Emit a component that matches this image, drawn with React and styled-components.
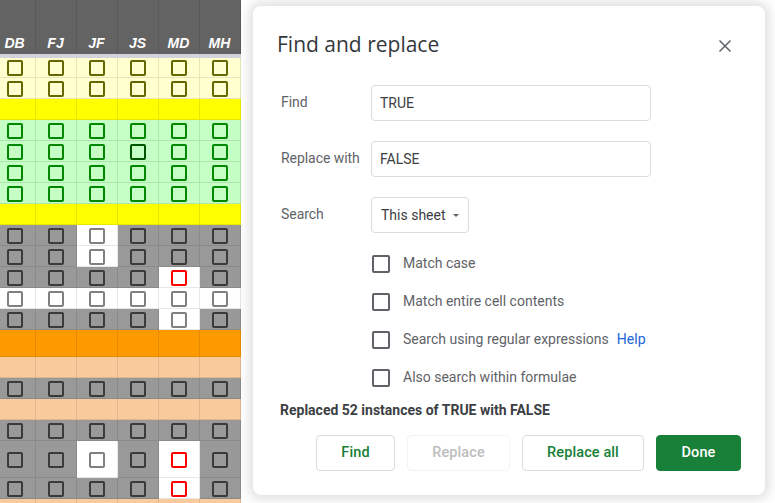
import React from "react";
import styled, { createGlobalStyle } from "styled-components";

const GlobalStyle = createGlobalStyle`
  html, body {
    margin: 0;
    padding: 0;
    background: #fff;
  }
  body {
    width: 775px;
    height: 503px;
    overflow: hidden;
    font-family: Roboto, "Liberation Sans", sans-serif;
  }
`;

const Page = styled.div`
  display: flex;
  align-items: flex-start;
  width: 775px;
  height: 503px;
  overflow: hidden;
`;

/* ---- sheet on the left ---- */

const Sheet = styled.div`
  flex: none;
  width: 241px;
  height: 503px;
  overflow: hidden;
`;

const Columns = styled.div`
  display: grid;
  grid-template-columns: repeat(6, 41px);
  width: 246px;
  margin-left: -5.5px;
`;

const HeaderCell = styled.div`
  height: 54px;
  box-sizing: border-box;
  display: flex;
  align-items: flex-end;
  justify-content: center;
  padding-bottom: 3px;
  background: #636363;
  border-right: 1px solid #5a5a5a;
  color: #fff;
  font: italic bold 14px "Liberation Sans", sans-serif;
`;

const HeaderGap = styled.div`
  height: 4px;
  background: #d3d3dc;
  grid-column: 1 / -1;
`;

const Cell = styled.div`
  height: ${(p) => p.$h || 21}px;
  box-sizing: border-box;
  display: flex;
  align-items: center;
  justify-content: center;
  background: ${(p) => p.$bg};
  border-right: 1px solid ${(p) => p.$line};
  border-bottom: 1px solid ${(p) => p.$line};
`;

const Tick = styled.span`
  width: 16px;
  height: 16px;
  box-sizing: border-box;
  border: 2px solid ${(p) => p.$color};
  border-radius: 2px;
  margin-top: 1px;
`;

/* ---- dialog ---- */

const Dialog = styled.div`
  flex: none;
  position: relative;
  width: 512px;
  height: 489px;
  box-sizing: border-box;
  margin: 6px 0 0 12px;
  padding: 22px 24px 24px 24px;
  background: #fff;
  border-radius: 8px;
  box-shadow: 0 0 12px 4px rgba(0, 0, 0, 0.13);
  display: flex;
  flex-direction: column;
`;

const TitleRow = styled.div`
  display: flex;
  align-items: center;
  justify-content: space-between;
  height: 32px;
  margin-bottom: 25px;
`;

const Title = styled.h1`
  margin: 0;
  font-family: "Open Sans", Roboto, sans-serif;
  font-size: 21px;
  font-weight: 400;
  color: #35383b;
`;

const Close = styled.button`
  width: 14px;
  height: 14px;
  padding: 0;
  margin-right: 9px;
  margin-top: 3px;
  border: 0;
  background: none;
  display: flex;
`;

const FieldRow = styled.div`
  display: flex;
  align-items: center;
  height: 36px;
  margin-bottom: 20px;
  padding-left: 4px;
`;

const Label = styled.label`
  width: 90px;
  margin-top: -2px;
  font-size: 14px;
  letter-spacing: -0.05px;
  color: #5f6368;
`;

const TextBox = styled.div`
  width: 280px;
  height: 36px;
  box-sizing: border-box;
  display: flex;
  align-items: center;
  padding-left: 8px;
  border: 1px solid #dadce0;
  border-radius: 4px;
  font-size: 14px;
  color: #3c4043;
`;

const Select = styled.div`
  width: 98px;
  height: 36px;
  box-sizing: border-box;
  display: flex;
  align-items: center;
  padding-left: 9px;
  gap: 7px;
  border: 1px solid #dadce0;
  border-radius: 4px;
  font-size: 14px;
  color: #3c4043;
`;

const Caret = styled.span`
  width: 0;
  height: 0;
  border-left: 3.5px solid transparent;
  border-right: 3.5px solid transparent;
  border-top: 3.5px solid #5f6368;
`;

const Options = styled.div`
  display: flex;
  flex-direction: column;
  gap: 20px;
  padding-left: 95px;
  margin-top: 2px;
`;

const Option = styled.div`
  display: flex;
  align-items: center;
  height: 18px;
  font-size: 14px;
  color: #5f6368;
`;

const OptionText = styled.span`
  margin-top: -2px;
`;

const Box = styled.span`
  width: 18px;
  height: 18px;
  box-sizing: border-box;
  border: 2px solid #5f6368;
  border-radius: 2px;
  margin-right: 13px;
`;

const Help = styled.a`
  margin-left: 8px;
  color: #1a63d8;
`;

const Status = styled.div`
  margin-top: 15px;
  padding-left: 3px;
  font-size: 14px;
  font-weight: 700;
  color: #3c4043;
`;

const Buttons = styled.div`
  display: flex;
  justify-content: flex-end;
  gap: 12px;
  margin-top: auto;
`;

const Button = styled.button`
  width: ${(p) => p.$w}px;
  height: 36px;
  box-sizing: border-box;
  padding: 0 0 2px;
  border-radius: 4px;
  font-family: Roboto, sans-serif;
  font-size: 14.5px;
  font-weight: 500;
  letter-spacing: 0.1px;
  background: ${(p) => (p.$primary ? "#188038" : "#fff")};
  color: ${(p) => (p.$primary ? "#fff" : p.$off ? "#bdbdbd" : "#188038")};
  border: 1px solid
    ${(p) => (p.$primary ? "#188038" : p.$off ? "#f1f3f4" : "#dadce0")};
`;

const people = ["DB", "FJ", "JF", "JS", "MD", "MH"];

const themes = {
  cream: { bg: "#ffffd0", line: "#e6e6b8", tick: "#666600" },
  yellow: { bg: "#ffff00", line: "#e6e600" },
  green: { bg: "#c6ffc6", line: "#aee6ae", tick: "#008800" },
  grey: { bg: "#999999", line: "#8a8a8a", tick: "#3a3a3a" },
  white: { bg: "#ffffff", line: "#e6e6e6", tick: "#808080" },
  orange: { bg: "#ff9900", line: "#e68a00" },
  peach: { bg: "#f9cb9c", line: "#e0b68c" },
  red: { bg: "#ffffff", line: "#e6e6e6", tick: "#ff0000" },
};

// one entry per sheet row: base colour, height, and the cells that differ
const rows = [
  { t: "cream", h: 20 },
  { t: "cream" },
  { t: "yellow" },
  { t: "green" },
  { t: "green", over: { 3: { tick: "#005500" } } },
  { t: "green" },
  { t: "green" },
  { t: "yellow" },
  { t: "grey", over: { 2: "white" } },
  { t: "grey", over: { 2: "white" } },
  { t: "grey", over: { 4: "red" } },
  { t: "white" },
  { t: "grey", over: { 4: "white" } },
  { t: "orange", h: 27 },
  { t: "peach" },
  { t: "grey" },
  { t: "peach" },
  { t: "grey" },
  { t: "grey", h: 37, over: { 2: "white", 4: "red" } },
  { t: "grey", over: { 4: "red" } },
  { t: "peach" },
];

function cellTheme(row, i) {
  const base = themes[row.t];
  const over = row.over && row.over[i];
  if (!over) return base;
  return typeof over === "string" ? themes[over] : { ...base, ...over };
}

function App() {
  return (
    <>
      <GlobalStyle />
      <Page>
        <Sheet>
          <Columns>
            {people.map((name) => (
              <HeaderCell key={name}>{name}</HeaderCell>
            ))}
            <HeaderGap />
            {rows.map((row, r) =>
              people.map((name, i) => {
                const c = cellTheme(row, i);
                return (
                  <Cell key={r + name} $bg={c.bg} $line={c.line} $h={row.h}>
                    {c.tick && <Tick $color={c.tick} />}
                  </Cell>
                );
              })
            )}
          </Columns>
        </Sheet>

        <Dialog>
          <TitleRow>
            <Title>Find and replace</Title>
            <Close aria-label="Close">
              <svg width="14" height="14" viewBox="0 0 14 14">
                <path
                  d="M1.5 1.5 L12.5 12.5 M12.5 1.5 L1.5 12.5"
                  stroke="#5f6368"
                  strokeWidth="1.5"
                  fill="none"
                />
              </svg>
            </Close>
          </TitleRow>

          <FieldRow>
            <Label>Find</Label>
            <TextBox>TRUE</TextBox>
          </FieldRow>
          <FieldRow>
            <Label>Replace with</Label>
            <TextBox>FALSE</TextBox>
          </FieldRow>
          <FieldRow>
            <Label>Search</Label>
            <Select>
              This sheet
              <Caret />
            </Select>
          </FieldRow>

          <Options>
            <Option>
              <Box />
              <OptionText>Match case</OptionText>
            </Option>
            <Option>
              <Box />
              <OptionText>Match entire cell contents</OptionText>
            </Option>
            <Option>
              <Box />
              <OptionText>
                Search using regular expressions
                <Help>Help</Help>
              </OptionText>
            </Option>
            <Option>
              <Box />
              <OptionText>Also search within formulae</OptionText>
            </Option>
          </Options>

          <Status>Replaced 52 instances of TRUE with FALSE</Status>

          <Buttons>
            <Button $w={79}>Find</Button>
            <Button $w={103} $off>
              Replace
            </Button>
            <Button $w={122}>Replace all</Button>
            <Button $w={85} $primary>
              Done
            </Button>
          </Buttons>
        </Dialog>
      </Page>
    </>
  );
}

export default App;
